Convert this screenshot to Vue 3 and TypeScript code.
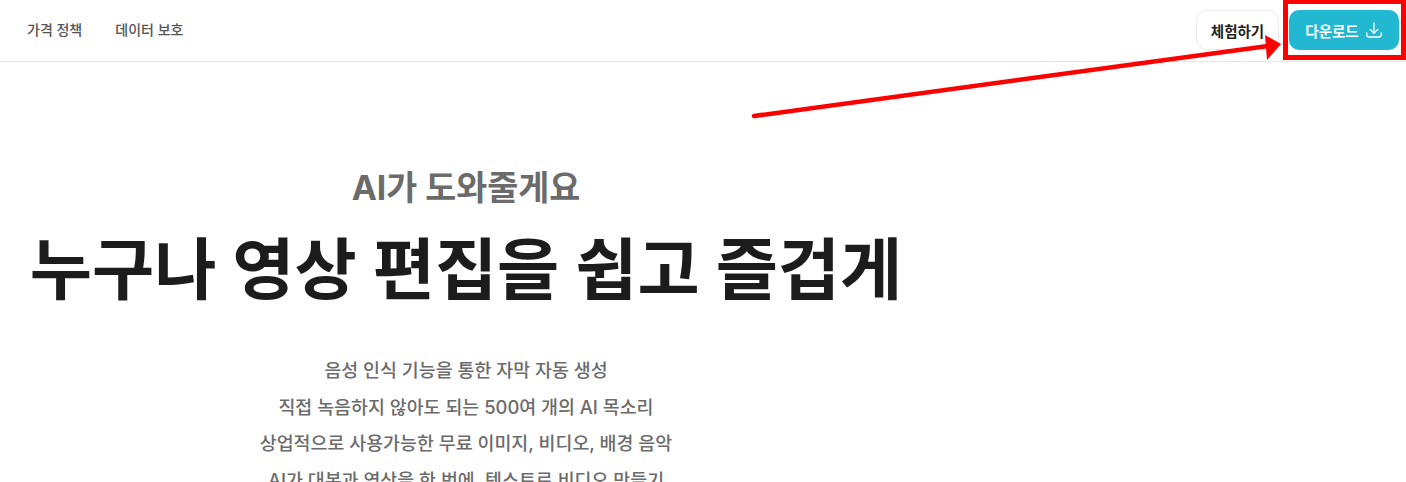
<template>
  <div class="page">
    <header class="topbar">
      <nav class="nav">
        <a class="nav-link">가격 정책</a>
        <a class="nav-link">데이터 보호</a>
      </nav>
      <div class="actions">
        <button class="btn btn-try">체험하기</button>
        <button class="btn btn-download">
          다운로드
          <svg class="dl-icon" width="18" height="18" viewBox="0 0 18 18" fill="none" stroke="currentColor" stroke-width="1.3" stroke-linecap="round" stroke-linejoin="round">
            <path d="M9 2v10" />
            <path d="M5.2 8.4 9 12.2l3.8-3.8" />
            <path d="M1.8 12v2.2c0 1 .8 1.8 1.8 1.8h10.8c1 0 1.8-.8 1.8-1.8V12" />
          </svg>
        </button>
      </div>
    </header>

    <section class="hero">
      <h2 class="subtitle">AI가 도와줄게요</h2>
      <h1 class="title">누구나 영상 편집을 쉽고 즐겁게</h1>
      <ul class="features">
        <li v-for="line in features" :key="line">{{ line }}</li>
      </ul>
    </section>

    <!-- screenshot annotation on top of the page -->
    <div class="mark-box"></div>
    <svg class="mark-arrow" width="1406" height="482" viewBox="0 0 1406 482">
      <line x1="754" y1="116" x2="1268" y2="46" stroke="#ff0000" stroke-width="4.5" stroke-linecap="round" />
      <polygon points="1281,44 1265,35 1267,60" fill="#ff0000" />
    </svg>
  </div>
</template>

<script setup lang="ts">
const features: string[] = [
  '음성 인식 기능을 통한 자막 자동 생성',
  '직접 녹음하지 않아도 되는 500여 개의 AI 목소리',
  '상업적으로 사용가능한 무료 이미지, 비디오, 배경 음악',
  'AI가 대본과 영상을 한 번에, 텍스트로 비디오 만들기'
]
</script>

<style>
html, body {
  margin: 0;
  height: 100%;
  overflow: hidden;
  background: #fff;
}
</style>

<style scoped>
.page {
  position: relative;
  width: 1406px;
  height: 482px;
  overflow: hidden;
  background: #fff;
  font-family: Inter, "Noto Sans CJK KR", sans-serif;
  color: #1f1f1f;
}

.topbar {
  display: flex;
  justify-content: space-between;
  align-items: center;
  height: 60px;
  padding: 0 7px 1px 27px;
  border-bottom: 1px solid #e8e8e8;
  box-sizing: content-box;
}

.nav {
  display: flex;
  gap: 33px;
}

.nav-link {
  font-size: 14px;
  line-height: 20px;
  font-weight: 500;
  color: #555;
}

.actions {
  display: flex;
  gap: 10px;
}

.btn {
  height: 40px;
  border-radius: 10px;
  font-family: inherit;
  font-size: 14.5px;
  font-weight: 700;
  display: flex;
  align-items: center;
  justify-content: center;
  box-sizing: border-box;
  padding: 0;
}

.btn-try {
  width: 83px;
  background: #fff;
  border: 1px solid #ececec;
  color: #222;
}

.btn-download {
  width: 110px;
  gap: 6px;
  background: #22b8d1;
  border: none;
  color: #fff;
}

.dl-icon {
  display: block;
}

.hero {
  display: flex;
  flex-direction: column;
  align-items: center;
  width: 932px;
  padding-top: 101px;
}

.subtitle {
  margin: 0;
  font-size: 33.7px;
  line-height: 50px;
  font-weight: 700;
  color: #6b6b6b;
}

.title {
  margin: 7px 0 0;
  font-size: 67.6px;
  line-height: 100px;
  font-weight: 700;
  color: #1c1c1c;
  white-space: nowrap;
}

.features {
  list-style: none;
  margin: 0;
  padding: 32px 0 0;
  text-align: center;
  font-size: 18.4px;
  line-height: 36.5px;
  font-weight: 500;
  color: #6b6b6b;
}

.mark-box {
  position: absolute;
  left: 1283px;
  top: -1px;
  width: 123px;
  height: 61px;
  border: 5px solid #ff0000;
  box-sizing: border-box;
}

.mark-arrow {
  position: absolute;
  left: 0;
  top: 0;
  pointer-events: none;
}
</style>
